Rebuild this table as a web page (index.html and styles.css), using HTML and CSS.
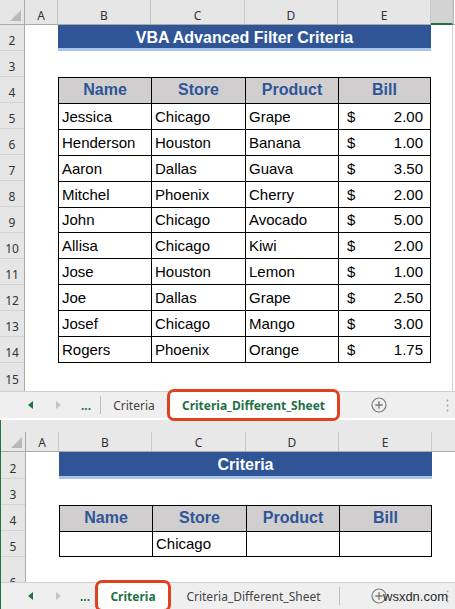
FILE: index.html
```html
<!DOCTYPE html>
<html>
<head>
<meta charset="utf-8">
<link rel="stylesheet" href="styles.css">
</head>
<body>
<section class="win win-top">
  <div class="colhdr">
    <div class="corner"><svg width="24" height="24" viewBox="0 0 24 24"><polygon points="21,10 21,21 10,21" fill="#b9b9b9"/></svg></div>
    <div class="ch">A</div><div class="ch">B</div><div class="ch">C</div><div class="ch">D</div><div class="ch">E</div><div class="ch ch-sel"></div><div class="ch ch-edge"></div>
  </div>
  <div class="main">
    <div class="rownums">
      <div class="rn">2</div><div class="rn">3</div><div class="rn">4</div><div class="rn">5</div><div class="rn">6</div><div class="rn">7</div><div class="rn">8</div><div class="rn">9</div><div class="rn">10</div><div class="rn">11</div><div class="rn">12</div><div class="rn">13</div><div class="rn">14</div><div class="rn rn-15">15</div>
    </div>
    <div class="cells cells-top">
      <div class="title">VBA Advanced Filter Criteria</div>
      <div class="tbl tbl-top">
        <div class="th">Name</div><div class="th">Store</div><div class="th">Product</div><div class="th">Bill</div>
        <div class="td">Jessica</div><div class="td">Chicago</div><div class="td">Grape</div><div class="td money"><span>$</span><span>2.00</span></div>
        <div class="td">Henderson</div><div class="td">Houston</div><div class="td">Banana</div><div class="td money"><span>$</span><span>1.00</span></div>
        <div class="td">Aaron</div><div class="td">Dallas</div><div class="td">Guava</div><div class="td money"><span>$</span><span>3.50</span></div>
        <div class="td">Mitchel</div><div class="td">Phoenix</div><div class="td">Cherry</div><div class="td money"><span>$</span><span>2.00</span></div>
        <div class="td">John</div><div class="td">Chicago</div><div class="td">Avocado</div><div class="td money"><span>$</span><span>5.00</span></div>
        <div class="td">Allisa</div><div class="td">Chicago</div><div class="td">Kiwi</div><div class="td money"><span>$</span><span>2.00</span></div>
        <div class="td">Jose</div><div class="td">Houston</div><div class="td">Lemon</div><div class="td money"><span>$</span><span>1.00</span></div>
        <div class="td">Joe</div><div class="td">Dallas</div><div class="td">Grape</div><div class="td money"><span>$</span><span>2.50</span></div>
        <div class="td">Josef</div><div class="td">Chicago</div><div class="td">Mango</div><div class="td money"><span>$</span><span>3.00</span></div>
        <div class="td">Rogers</div><div class="td">Phoenix</div><div class="td">Orange</div><div class="td money"><span>$</span><span>1.75</span></div>
      </div>
    </div>
  </div>
  <div class="tabbar tabbar-top">
    <div class="nav"><svg width="5" height="8" viewBox="0 0 5 8"><polygon points="5,0 5,8 0,4" fill="#217346"/></svg></div>
    <div class="nav"><svg width="5" height="8" viewBox="0 0 5 8"><polygon points="0,0 0,8 5,4" fill="#c4c4c4"/></svg></div>
    <div class="more">...</div>
    <div class="sep"></div>
    <div class="tab tab-crit">Criteria</div>
    <div class="tab tab-active tab-active-top">Criteria_Different_Sheet</div>
    <div class="plus plus-top"><svg width="16" height="16" viewBox="0 0 16 16"><circle cx="8" cy="8" r="7" fill="none" stroke="#7b7b7b" stroke-width="1.2"/><path d="M8 4.2V11.8M4.2 8H11.8" stroke="#7b7b7b" stroke-width="1.4"/></svg></div>
    <div class="vdots"><svg width="3" height="13" viewBox="0 0 3 13"><circle cx="1.5" cy="1.5" r="1" fill="#a0a0a0"/><circle cx="1.5" cy="6.5" r="1" fill="#a0a0a0"/><circle cx="1.5" cy="11.5" r="1" fill="#a0a0a0"/></svg></div>
  </div>
</section>

<section class="win win-bottom">
  <div class="colhdr colhdr-b">
    <div class="corner"><svg width="24" height="19" viewBox="0 0 24 19"><polygon points="21,5 21,16 10,16" fill="#b9b9b9"/></svg></div>
    <div class="ch">A</div><div class="ch">B</div><div class="ch">C</div><div class="ch">D</div><div class="ch">E</div><div class="ch ch-rest"></div>
  </div>
  <div class="main">
    <div class="rownums">
      <div class="rn rn-b2">2</div><div class="rn">3</div><div class="rn">4</div><div class="rn">5</div><div class="rn rn-clip">6</div>
    </div>
    <div class="cells cells-bottom">
      <div class="title title-b">Criteria</div>
      <div class="tbl tbl-bottom">
        <div class="th">Name</div><div class="th">Store</div><div class="th">Product</div><div class="th">Bill</div>
        <div class="td"></div><div class="td">Chicago</div><div class="td"></div><div class="td"></div>
      </div>
    </div>
  </div>
  <div class="tabbar tabbar-bottom">
    <div class="nav"><svg width="5" height="8" viewBox="0 0 5 8"><polygon points="5,0 5,8 0,4" fill="#217346"/></svg></div>
    <div class="nav"><svg width="5" height="8" viewBox="0 0 5 8"><polygon points="0,0 0,8 5,4" fill="#c4c4c4"/></svg></div>
    <div class="more more-b">...</div>
    <div class="tab tab-active tab-active-b">Criteria</div>
    <div class="tab tab-other">Criteria_Different_Sheet</div>
    <div class="sep"></div>
    <div class="plus plus-b"><svg width="16" height="16" viewBox="0 0 16 16"><circle cx="8" cy="8" r="7" fill="none" stroke="#7b7b7b" stroke-width="1.2"/><path d="M8 4.2V11.8M4.2 8H11.8" stroke="#7b7b7b" stroke-width="1.4"/></svg></div>
    <div class="watermark">wsxdn.com</div>
    <div class="vdots"><svg width="3" height="13" viewBox="0 0 3 13"><circle cx="1.5" cy="1.5" r="1" fill="#a0a0a0"/><circle cx="1.5" cy="6.5" r="1" fill="#a0a0a0"/><circle cx="1.5" cy="11.5" r="1" fill="#a0a0a0"/></svg></div>
  </div>
</section>
</body>
</html>
```

FILE: styles.css
```css
* { box-sizing: border-box; margin: 0; padding: 0; }
html, body { width: 455px; height: 609px; overflow: hidden; background: #fff; }
body {
  font-family: "Liberation Sans", Arial, sans-serif;
  display: flex;
  flex-direction: column;
  gap: 2px;
}
.win { display: flex; flex-direction: column; background: #fff; position: relative; }
.win-top { z-index: 2; }
.win-bottom { border-left: 1px solid #217346; height: 189px; }

.colhdr {
  display: grid;
  grid-template-columns: 25px 33px 93px 94px 93px 93px 22px 1fr;
  height: 25px;
  background: #e6e6e6;
  border-bottom: 1px solid #a9a9a9;
}
.colhdr-b {
  grid-template-columns: 25px 33px 93px 94px 93px 93px 1fr;
  height: 32px;
  padding-top: 12px;
  background: #e8e8e8;
}
.corner { border-right: 1px solid #a9a9a9; display: flex; }
.ch {
  border-right: 1px solid #c9c9c9;
  display: flex;
  align-items: flex-end;
  justify-content: center;
  font-family: "Noto Sans", sans-serif;
  font-size: 12px;
  color: #333;
  padding-bottom: 0;
}
.ch-sel { background: #d3d3d3; border-bottom: 2px solid #217346; margin-bottom: -1px; }
.ch-edge { background: #fff; border-right: none; border-left: 1px solid #bdbdbd; }
.ch-rest { border-right: none; }

.main { display: flex; }
.rownums {
  width: 25px;
  flex: none;
  display: flex;
  flex-direction: column;
  background: #e6e6e6;
  border-right: 1px solid #a9a9a9;
}
.rn {
  height: 26px;
  flex: none;
  border-bottom: 1px solid #d2d2d2;
  display: flex;
  align-items: flex-end;
  justify-content: center;
  font-family: "Noto Sans", sans-serif;
  font-size: 12px;
  color: #333;
  padding-bottom: 1px;
}
.rn-15 { height: 28px; border-bottom: none; padding-bottom: 3px; }
.rn-b2 { height: 27px; }
.rn-clip { height: 25px; align-items: flex-start; padding-top: 17px; overflow: hidden; border-bottom: none; }

.cells {
  flex: 1;
  display: grid;
  grid-template-columns: 33px 93px 94px 93px 93px 1fr;
}
.cells-top { grid-template-rows: 26px 26px 286px 28px; border-right: 1px solid #cfcfcf; margin-right: 2px; }
.cells-bottom { grid-template-rows: 27px 26px 52px 25px; }

.title {
  grid-column: 2 / 6;
  grid-row: 1;
  background: #2f5597;
  border-bottom: 3px solid #a9c4eb;
  color: #fff;
  font-weight: bold;
  font-size: 16px;
  display: flex;
  align-items: center;
  justify-content: center;
  padding-top: 2px;
}
.tbl {
  grid-column: 2 / 6;
  grid-row: 3;
  display: grid;
  grid-template-columns: 92px 93px 92px 91px;
  grid-auto-rows: 1fr;
  gap: 1px;
  background: #000;
  border: 1px solid #000;
}
.th {
  background: #d0cece;
  color: #2f5597;
  font-weight: bold;
  font-size: 16px;
  display: flex;
  align-items: center;
  justify-content: center;
}
.td {
  background: #fff;
  color: #000;
  font-size: 15px;
  display: flex;
  align-items: center;
  padding-left: 3px;
}
.money { justify-content: space-between; padding: 0 7px 0 8px; }

.tabbar {
  height: 27px;
  flex: none;
  background: #efefef;
  border-top: 1px solid #cfcfcf;
  display: flex;
  align-items: center;
  padding-left: 16px;
  position: relative;
  z-index: 2;
  font-family: "Noto Sans", sans-serif;
  font-size: 12px;
}
.tabbar-bottom { padding-left: 15px; }
.nav { width: 28px; display: flex; justify-content: center; }
.more { width: 28px; text-align: center; color: #217346; font-weight: bold; font-size: 12px; }
.more-b { width: 26px; }
.sep { width: 1px; height: 18px; background: #bdbdbd; flex: none; }
.tab {
  height: 100%;
  display: flex;
  align-items: center;
  justify-content: center;
  color: #444;
  flex: none;
}
.tab-crit { width: 66px; }
.tab-active {
  background: #fff;
  color: #1e7145;
  font-weight: bold;
  outline: 3px solid #e0421f;
  border-radius: 4px;
}
.tab-active-top { width: 167px; margin-left: 3px; }
.tab-active-b { width: 70px; }
.tab-other { width: 171px; }
.plus { display: flex; flex: none; }
.plus-top { margin-left: 34px; }
.plus-b { margin-left: 31px; }
.watermark {
  position: absolute;
  left: 382px;
  top: 6px;
  font-family: "Liberation Sans", Arial, sans-serif;
  font-size: 13px;
  color: #2a2a2a;
}
.vdots { margin-left: auto; margin-right: 6px; display: flex; }
```
